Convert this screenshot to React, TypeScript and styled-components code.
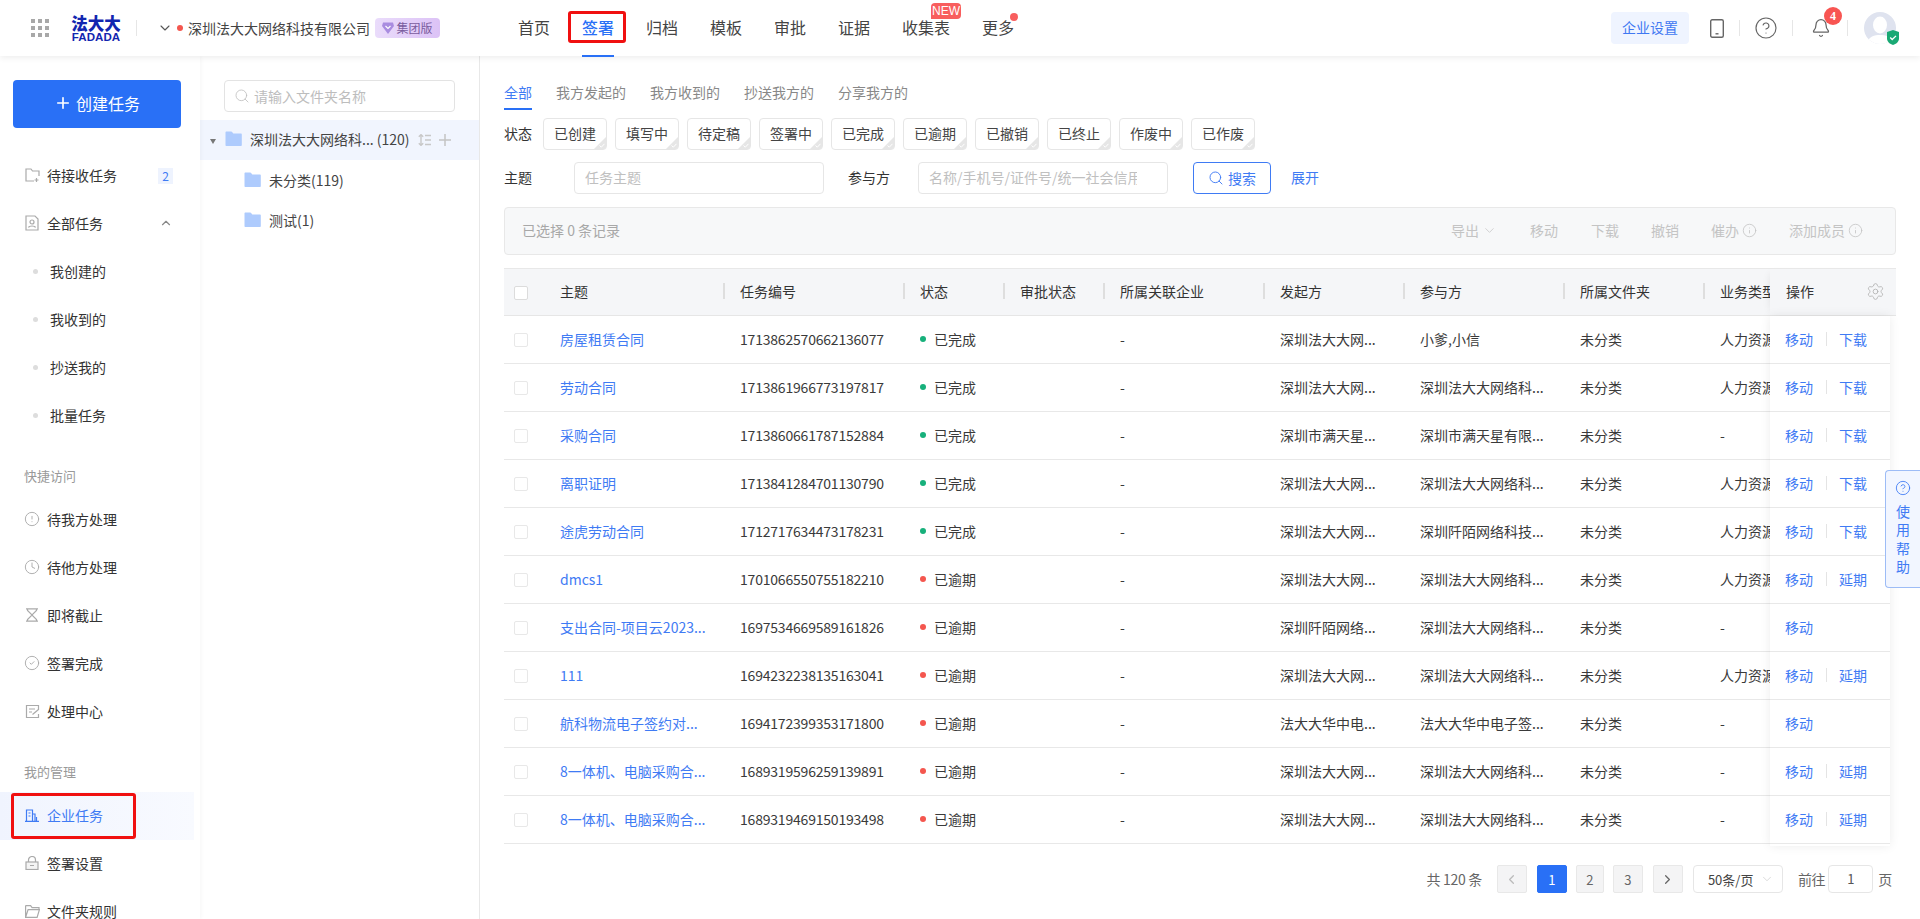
import React from "react";
import styled, { createGlobalStyle } from "styled-components";
import {
  Search, Plus, ChevronDown, ChevronUp, ChevronLeft, ChevronRight, CircleHelp, Bell, Settings, Info,
  CircleAlert, Clock, CircleCheck,
} from "lucide-react";

const BLUE = "#2970f6";
const LINK = "#3f7bf4";
const TEXT = "#333";
const COLS = "180px 180px 100px 100px 160px 140px 160px 140px 120px";

const Global = createGlobalStyle`
  html, body { margin: 0; padding: 0; height: 100%; overflow: hidden; background: #fff; }
  #root { height: 919px; }
  * { box-sizing: border-box; }
  body { font-family: "Noto Sans CJK SC", "Liberation Sans", sans-serif; font-size: 14px; color: ${TEXT}; }
`;

const Page = styled.div`
  display: flex; flex-direction: column; height: 919px; width: 1920px; overflow: hidden; position: relative;
`;

/* ---------- top bar ---------- */
const Header = styled.header`
  height: 56px; flex: none; display: flex; align-items: center; position: relative; z-index: 5;
  background: #fff; box-shadow: 0 2px 6px rgba(0, 0, 0, 0.07);
`;
const Apps = styled.div`
  margin-left: 31px; display: grid; grid-template-columns: repeat(3, 4px); grid-auto-rows: 4px; gap: 3px;
  span { background: #a8a8a8; }
`;
const Logo = styled.div`
  margin-left: 22px; width: 50px; display: flex; flex-direction: column; align-items: center; color: #1226b0;
  b { font-size: 16.5px; line-height: 16px; font-weight: 900; display: block; height: 16px; }
  i { font-size: 11.5px; line-height: 10px; height: 10px; display: block; font-style: normal; font-family: "Liberation Sans", sans-serif; font-weight: 700; letter-spacing: 0.1px; margin-top: 1px; }
`;
const VLine = styled.span<{ $l?: number }>`
  width: 1px; height: 16px; background: #e6e6e6; flex: none; margin-left: ${(p) => p.$l ?? 0}px;
`;
const Company = styled.div`
  display: flex; align-items: center; margin-left: 20px;
  svg { color: #555; }
`;
const RedDot = styled.span`
  width: 6px; height: 6px; border-radius: 50%; background: #f4564e; margin: 0 5px 0 4px;
`;
const CompanyName = styled.span`
  font-size: 14px; line-height: 20px; color: #444; width: 182px; white-space: nowrap;
`;
const Edition = styled.span`
  margin-left: 5px; width: 65px; height: 20px; border-radius: 4px; display: flex; align-items: center; justify-content: center; gap: 2px;
  background: linear-gradient(90deg, #eadcfb, #dcc2f6); color: #7a5c9e; font-size: 12px; line-height: 20px;
`;
const Nav = styled.nav`
  margin-left: 78px; height: 56px; display: flex; gap: 32px;
`;
const NavItem = styled.a<{ $active?: boolean }>`
  position: relative; height: 56px; line-height: 55px; font-size: 16px; white-space: nowrap;
  color: ${(p) => (p.$active ? BLUE : "#444")}; font-weight: ${(p) => (p.$active ? 500 : 400)};
  ${(p) => p.$active && `&::after { content: ""; position: absolute; left: 0; right: 0; bottom: -1px; height: 2px; background: ${BLUE}; }`}
`;
const NewTag = styled.span`
  position: absolute; left: 29px; top: 3px; width: 30px; height: 16px; background: #f85e5e; color: #fff; font-size: 12px; line-height: 16px;
  text-align: center; border-radius: 4px 4px 4px 0; font-family: "Liberation Sans", sans-serif;
`;
const NavDot = styled.span`
  position: absolute; right: -4px; top: 13px; width: 8px; height: 8px; border-radius: 50%; background: #f85e5e;
`;
const Mark = styled.span`
  position: absolute; border: 3px solid #f01010; border-radius: 3px; pointer-events: none;
`;
const NavMark = styled(Mark)`
  left: -14px; top: 11px; width: 58px; height: 32px;
`;
const HeaderRight = styled.div`
  margin-left: auto; display: flex; align-items: center; padding-right: 24px; color: #666;
`;
const OrgButton = styled.a`
  width: 78px; height: 32px; border-radius: 4px; background: #eff4ff; color: #3f78f2; font-size: 14px; line-height: 31px; text-align: center;
`;
const HeaderIcon = styled.span<{ $l: number; $r: number }>`
  display: flex; position: relative; margin-left: ${(p) => p.$l}px; margin-right: ${(p) => p.$r}px;
`;
const CountBadge = styled.span`
  position: absolute; left: 13px; top: -11px; width: 18px; height: 18px; border-radius: 50%; background: #f85552; color: #fff;
  font: 700 12px/18px "Liberation Serif", serif; text-align: center;
`;
const Avatar = styled.span`
  position: relative; width: 32px; height: 32px; margin-left: 16px; display: block;
`;

/* ---------- body ---------- */
const Body = styled.div`
  flex: 1; min-height: 0; display: flex;
`;
const Sidebar = styled.aside`
  width: 200px; flex: none; padding-top: 24px; box-shadow: 1px 0 4px rgba(0, 0, 0, 0.04); position: relative; z-index: 1; overflow: hidden;
`;
const CreateButton = styled.a`
  display: flex; align-items: center; justify-content: center; gap: 4px; width: 168px; height: 48px; margin: 0 0 24px 13px; padding-bottom: 2px;
  background: ${BLUE}; color: #fff; border-radius: 4px; font-size: 16px;
`;
const SideRow = styled.div<{ $active?: boolean }>`
  position: relative; height: 48px; width: 194px; display: flex; align-items: center; padding: 0 0 2px 25px; font-size: 14px;
  color: ${(p) => (p.$active ? LINK : TEXT)};
  background: ${(p) => (p.$active ? "linear-gradient(90deg,#f0f4fe,#f8faff)" : "transparent")};
  svg { color: ${(p) => (p.$active ? LINK : "#aaa")}; flex: none; }
`;
const SideIcon = styled.span`
  width: 22px; flex: none; display: flex; align-items: center;
`;
const LucideIcon = styled(SideIcon)`
  margin-left: -1px; width: 23px;
`;
const SideMark = styled(Mark)`
  left: 11px; top: 1px; width: 125px; height: 46px;
`;
const SubRow = styled(SideRow)`
  padding-left: 33px; gap: 12px;
  &::before { content: ""; width: 5px; height: 5px; border-radius: 50%; background: #ddd; }
`;
const SideBadge = styled.span`
  position: absolute; left: 158px; top: 16px; width: 15px; height: 16px; background: #eef3fe; color: ${LINK}; font-size: 12px; line-height: 16px; text-align: center;
`;
const SideChevron = styled.span`
  position: absolute; left: 159px; top: 16px; display: flex;
  svg { color: #888; }
`;
const SectionLabel = styled.div`
  margin: 24px 0 8px 24px; height: 24px; line-height: 23px; font-size: 13px; color: #999;
`;

const FolderPane = styled.section`
  width: 280px; flex: none; border-right: 1px solid #e8e8e8; padding-top: 24px;
`;
const FolderSearch = styled.div`
  margin: 0 24px 8px; width: 231px; height: 32px; border: 1px solid #e3e3e3; border-radius: 4px; display: flex; align-items: center; padding-left: 9px; gap: 4px;
  color: #bdbdbd; font-size: 14px; line-height: 20px; white-space: nowrap;
`;
const FolderRow = styled.div<{ $active?: boolean; $indent?: number }>`
  position: relative; height: 40px; display: flex; align-items: center; gap: 8px; white-space: nowrap;
  padding: 0 0 ${(p) => (p.$active ? 2 : 0)}px ${(p) => p.$indent ?? 0}px;
  background: ${(p) => (p.$active ? "#f1f5fe" : "transparent")}; color: #444;
`;
const Caret = styled.span`
  position: absolute; left: 10px; top: 19px; border: 3px solid transparent; border-top: 5px solid #777; border-bottom: 0;
`;
const FolderTools = styled.span`
  position: absolute; left: 218px; top: 14px; display: flex; gap: 8px;
`;

const Main = styled.main`
  flex: 1; min-width: 0; padding: 20px 24px 0; position: relative;
`;
const Tabs = styled.div`
  display: flex; gap: 24px; height: 34px;
`;
const Tab = styled.a<{ $active?: boolean }>`
  height: 34px; line-height: 33px; font-size: 14px; white-space: nowrap; color: ${(p) => (p.$active ? LINK : "#888")};
  border-bottom: 2px solid ${(p) => (p.$active ? BLUE : "transparent")};
`;
const FilterRow = styled.div<{ $top: number }>`
  display: flex; align-items: center; height: 32px; margin-top: ${(p) => p.$top}px;
`;
const FilterLabel = styled.span<{ $w: number; $l?: number }>`
  width: ${(p) => p.$w}px; margin-left: ${(p) => p.$l ?? 0}px; flex: none; font-size: 14px; line-height: 20px; padding-bottom: 2px; color: ${TEXT}; white-space: nowrap;
`;
const Chip = styled.span`
  position: relative; width: 64px; height: 32px; margin-right: 8px; border: 1px solid #e6e6e6; border-radius: 4px; overflow: hidden;
  text-align: center; line-height: 29px; font-size: 14px; color: #444; white-space: nowrap;
  &::after { content: ""; position: absolute; right: 0; bottom: 0; border: 6px solid transparent; border-right-color: #e6e6e6; border-bottom-color: #e6e6e6; }
  svg { position: absolute; right: 1px; bottom: 1px; z-index: 1; }
`;
const TextBox = styled.div`
  width: 250px; height: 32px; border: 1px solid #e6e6e6; border-radius: 4px; padding: 0 30px 0 10px; line-height: 29px; color: #c0c0c0; font-size: 14px; white-space: nowrap;
  span { display: block; overflow: hidden; }
`;
const SearchButton = styled.a`
  margin-left: 25px; width: 78px; height: 32px; border: 1px solid ${LINK}; border-radius: 4px; color: ${LINK}; display: flex; align-items: center; justify-content: center; gap: 4px; font-size: 14px; padding-bottom: 1px;
`;
const Expand = styled.a`
  margin-left: 20px; color: ${LINK}; font-size: 14px; line-height: 20px; padding-bottom: 2px;
`;
const SelectBar = styled.div`
  margin-top: 13px; height: 48px; background: #f7f8f9; border: 1px solid #e8e8e8; border-radius: 4px; display: flex; align-items: center; padding: 0 32px 2px 17px;
  color: #a8a8a8; font-size: 14px; white-space: nowrap;
`;
const BarAction = styled.span<{ $w: number }>`
  display: flex; align-items: center; gap: 3px; color: #c4c4c4; width: ${(p) => p.$w}px; flex: none;
  &:first-of-type { margin-left: auto; }
`;

const Table = styled.div`
  margin-top: 13px; display: flex; position: relative; height: 578px;
`;
const ScrollPart = styled.div`
  width: 1266px; flex: none; overflow: hidden; height: 577px;
`;
const HeadRow = styled.div`
  display: grid; grid-template-columns: 40px ${COLS}; width: 1320px; height: 48px; background: #f5f6f8; border-top: 1px solid #e8e8e8; border-bottom: 1px solid #e6e6e6; align-items: center;
`;
const BodyRow = styled.div`
  display: grid; grid-template-columns: 40px ${COLS}; width: 1320px; height: 48px; border-bottom: 1px solid #e8e8e8; align-items: center;
`;
const Cell = styled.div<{ $link?: boolean }>`
  padding: 0 0 2px 16px; font-size: 14px; line-height: 20px; white-space: nowrap; overflow: hidden; color: ${(p) => (p.$link ? LINK : "#3a3a3a")};
`;
const NumberCell = styled(Cell)`
  letter-spacing: -0.2px;
`;
const HeadCell = styled(Cell)`
  position: relative; overflow: visible; color: #333;
  &::before { content: ""; position: absolute; left: -1px; top: 2px; width: 2px; height: 16px; background: #dedede; }
`;
const FirstHead = styled(Cell)`
  color: #333;
`;
const CheckCell = styled.div`
  padding: 1px 0 0 10px;
`;
const Check = styled.span<{ $head?: boolean }>`
  display: block; width: 14px; height: 14px; background: #fff; border: 1px solid ${(p) => (p.$head ? "#dcdcdc" : "#e8e8e8")}; border-radius: 2px;
`;
const Status = styled.span<{ $color: string }>`
  display: flex; align-items: center; gap: 8px;
  &::before { content: ""; width: 6px; height: 6px; border-radius: 50%; background: ${(p) => p.$color}; }
`;
const FixedPart = styled.div`
  width: 126px; flex: none; position: relative; z-index: 2; margin-bottom: -8px;
`;
const FixedHead = styled.div`
  height: 48px; background: #f5f6f8; border-top: 1px solid #e8e8e8; border-bottom: 1px solid #e6e6e6; display: flex; align-items: center; justify-content: space-between; padding: 0 11px 2px 16px;
  box-shadow: -6px 0 8px -6px rgba(0, 0, 0, 0.08); color: #333;
  svg { color: #b4b4b4; }
`;
const FixedBody = styled.div`
  width: 120px; background: #fff; box-shadow: 0 0 10px rgba(0, 0, 0, 0.08); padding-bottom: 2px;
`;
const FixedRow = styled.div`
  height: 48px; border-bottom: 1px solid #e8e8e8; display: flex; align-items: center; padding: 0 0 2px 15px; font-size: 14px; color: ${LINK};
  i { width: 1px; height: 14px; background: #e4e4e4; margin: 0 12px 0 13px; }
`;
const Pager = styled.div`
  margin-top: 19px; margin-right: 4px; display: flex; align-items: center; justify-content: flex-end; height: 28px; font-size: 14px; color: #666;
`;
const PageButton = styled.span<{ $on?: boolean; $w?: number; $l?: number }>`
  width: ${(p) => p.$w ?? 30}px; height: 28px; margin-left: ${(p) => p.$l ?? 10}px; border-radius: 2px; display: flex; align-items: center; justify-content: center; border: 1px solid ${(p) => (p.$on ? BLUE : "#e8e8e8")};
  background: ${(p) => (p.$on ? BLUE : "#f4f4f5")}; color: ${(p) => (p.$on ? "#fff" : "#666")}; font-size: 13px;
`;
const PageSelect = styled.span`
  width: 90px; height: 28px; margin-left: 10px; border: 1px solid #e6e6e6; border-radius: 4px; display: flex; align-items: center; justify-content: space-between; padding: 0 8px 0 14px; color: #444; font-size: 13px;
  svg { color: #ccc; }
`;
const PageInput = styled.span`
  width: 45px; height: 28px; margin: 0 5px 0 3px; border: 1px solid #e6e6e6; border-radius: 4px; text-align: center; line-height: 26px; color: #555; font-size: 13px;
`;
const PagerText = styled.span<{ $l?: number }>`
  margin-left: ${(p) => p.$l ?? 0}px; white-space: nowrap; letter-spacing: -0.3px; line-height: 20px; padding-bottom: 1px;
`;
const HelpFloat = styled.div`
  position: absolute; right: 0; top: 470px; width: 35px; height: 118px; background: #f2f6ff; border: 1px solid #9dbcf6; border-right: 0; border-radius: 4px 0 0 4px; z-index: 6;
  display: flex; flex-direction: column; align-items: center; padding-top: 9px; color: ${LINK}; font-size: 14px; line-height: 18.4px; text-align: center;
  svg { margin-bottom: 6px; flex: none; }
`;

const FolderIcon = ({ c = "#aecbfd" }: { c?: string }) => (
  <svg width="17" height="16" viewBox="0 0 17 16">
    <path d="M0.500 1.500C0.500 .9 .9 .5 1.500 .5h4.700c.4 0 .7.2.9.5L8.300 2.500H15.800c.6 0 1 .4 1 1V14c0 .6-.4 1-1 1H1.500c-.6 0-1-.4-1-1z" fill={c} />
  </svg>
);
const ico = { fill: "none", stroke: "#aaa", strokeWidth: 1.2 };
const InboxIcon = () => (
  <svg width="15" height="16" viewBox="0 0 15 16" {...ico}><path d="M9 14H1V2h5l1.500 2H14v5" /><path d="M11.500 11v4M9.500 13h4" /></svg>
);
const PersonDoc = () => (
  <svg width="14" height="16" viewBox="0 0 14 16" {...ico}><path d="M1 1h9l3 3v11H1z" /><circle cx="7" cy="7" r="2" /><path d="M3.500 12.500c.6-2 6.400-2 7 0" /></svg>
);
const TimerIcon = () => (
  <svg width="14" height="14" viewBox="0 0 14 14" {...ico}><path d="M1 .8h12M1 13.200h12M2.500 1v1.500L7 7l4.500-4.500V1M2.500 13v-1.500L7 7l4.500 4.500V13" /></svg>
);
const TaskDoc = () => (
  <svg width="15" height="15" viewBox="0 0 15 15" {...ico}><path d="M13.500 6V1.500h-12v12H13.500V10" /><path d="M4 5h6M4 8h3" /><path d="M7.500 10.500l6-5" /></svg>
);
const Building = () => (
  <svg width="14" height="13" viewBox="0 0 14 13" fill="none" stroke={LINK} strokeWidth="1.200"><path d="M1.500 12V1h6v11M7.500 5h2.500v7" /><path d="M0 12.400h14M3.500 4h2M3.500 7h2M11.500 12V8" /></svg>
);
const LockIcon = () => (
  <svg width="14" height="14" viewBox="0 0 14 14" {...ico}><rect x="1" y="6" width="12" height="7.500" fill="#f4f4f4" /><path d="M3.500 6V4a3.500 3.500 0 017 0v2M5 9.500h4" /></svg>
);
const OpenFolder = () => (
  <svg width="15" height="13" viewBox="0 0 15 13" {...ico}><path d="M.6.6h5l1.500 2h6.900v2M.6 12.400V.6M.6 12.400h11.500L14.400 4.600H3.100z" /></svg>
);
const PhoneIcon = () => (
  <svg width="14" height="19" viewBox="0 0 14 19" fill="none" stroke="#666" strokeWidth="1.400"><rect x=".7" y=".7" width="12.600" height="17.600" rx="1.500" /><path d="M5.500 14.800h3" /></svg>
);
const GemIcon = () => (
  <svg width="12" height="14" viewBox="0 0 12 14"><path d="M1 1.500h10l1 3.500-6 8-6-8z" fill="#a98ce0" /><path d="M3.500 5L6 7.500 8.500 5" stroke="#fff" strokeWidth="1.100" fill="none" /></svg>
);
const SortIcon = () => (
  <svg width="13" height="12" viewBox="0 0 13 12" fill="none" stroke="#c8c8c8" strokeWidth="1.400"><path d="M3 .5v11M.8 2.800L3 .6l2.200 2.200M.8 9.200L3 11.400l2.200-2.200M7 1.500h6M7 6h6M7 10.500h6" /></svg>
);
const AddIcon = () => (
  <svg width="12" height="12" viewBox="0 0 12 12" fill="none" stroke="#c4c4c4" strokeWidth="1.500"><path d="M6 0v12M0 6h12" /></svg>
);
const ChipCheck = () => (
  <svg width="6" height="5" viewBox="0 0 6 5" fill="none" stroke="#fff" strokeWidth="1"><path d="M.5 2.500l1.800 1.700L5.500.8" /></svg>
);
const AvatarImg = () => (
  <svg width="38" height="38" viewBox="0 0 38 38">
    <clipPath id="av"><circle cx="16" cy="16" r="16" /></clipPath>
    <g clipPath="url(#av)">
      <rect width="32" height="32" fill="#dfe3ef" />
      <ellipse cx="16" cy="13" rx="7" ry="8.500" fill="#fff" />
      <path d="M3 32c1-8 8-9 13-9s12 1 13 9z" fill="#fff" />
    </g>
    <path d="M23 20l6-2 6 2v6.500c0 3.500-3 5.500-6 6.500-3-1-6-3-6-6.500z" fill="#19a974" />
    <path d="M26.200 25.500l2 2 3.800-3.600" stroke="#fff" strokeWidth="1.300" fill="none" />
  </svg>
);

const FAD = "深圳法大大网...";
const SZ = "深圳法大大网络科...";
const HR = "人力资源";
const rows = [
  ["房屋租赁合同", "1713862570662136077", "已完成", FAD, "小爹,小信", HR, "下载"],
  ["劳动合同", "1713861966773197817", "已完成", FAD, SZ, HR, "下载"],
  ["采购合同", "1713860661787152884", "已完成", "深圳市满天星...", "深圳市满天星有限...", "-", "下载"],
  ["离职证明", "1713841284701130790", "已完成", FAD, SZ, HR, "下载"],
  ["途虎劳动合同", "1712717634473178231", "已完成", FAD, "深圳阡陌网络科技...", HR, "下载"],
  ["dmcs1", "1701066550755182210", "已逾期", FAD, SZ, HR, "延期"],
  ["支出合同-项目云2023...", "1697534669589161826", "已逾期", "深圳阡陌网络...", SZ, "-", ""],
  ["111", "1694232238135163041", "已逾期", FAD, SZ, HR, "延期"],
  ["航科物流电子签约对...", "1694172399353171800", "已逾期", "法大大华中电...", "法大大华中电子签...", "-", ""],
  ["8一体机、电脑采购合...", "1689319596259139891", "已逾期", FAD, SZ, "-", "延期"],
  ["8一体机、电脑采购合...", "1689319469150193498", "已逾期", FAD, SZ, "-", "延期"],
];
const chips = ["已创建", "填写中", "待定稿", "签署中", "已完成", "已逾期", "已撤销", "已终止", "作废中", "已作废"];
const navs = ["首页", "签署", "归档", "模板", "审批", "证据", "收集表", "更多"];

export default function App() {
  return (
    <Page>
      <Global />
      <Header>
        <Apps>{Array.from({ length: 9 }, (_, i) => <span key={i} />)}</Apps>
        <Logo><b>法大大</b><i>FADADA</i></Logo>
        <VLine $l={15} />
        <Company>
          <ChevronDown size={16} strokeWidth={1.6} />
          <RedDot />
          <CompanyName>深圳法大大网络科技有限公司</CompanyName>
          <Edition><GemIcon />集团版</Edition>
        </Company>
        <Nav>
          {navs.map((n) => (
            <NavItem key={n} $active={n === "签署"}>
              {n}
              {n === "签署" && <NavMark />}
              {n === "收集表" && <NewTag>NEW</NewTag>}
              {n === "更多" && <NavDot />}
            </NavItem>
          ))}
        </Nav>
        <HeaderRight>
          <OrgButton>企业设置</OrgButton>
          <HeaderIcon $l={21} $r={15}><PhoneIcon /></HeaderIcon>
          <VLine />
          <HeaderIcon $l={14} $r={14}><CircleHelp size={24} strokeWidth={1.15} /></HeaderIcon>
          <VLine />
          <HeaderIcon $l={18} $r={16}><Bell size={20} strokeWidth={1.5} /><CountBadge>4</CountBadge></HeaderIcon>
          <VLine />
          <Avatar><AvatarImg /></Avatar>
        </HeaderRight>
      </Header>
      <Body>
        <Sidebar>
          <CreateButton><Plus size={18} strokeWidth={2.2} />创建任务</CreateButton>
          <SideRow><SideIcon><InboxIcon /></SideIcon>待接收任务<SideBadge>2</SideBadge></SideRow>
          <SideRow><SideIcon><PersonDoc /></SideIcon>全部任务<SideChevron><ChevronUp size={14} /></SideChevron></SideRow>
          <SubRow>我创建的</SubRow>
          <SubRow>我收到的</SubRow>
          <SubRow>抄送我的</SubRow>
          <SubRow>批量任务</SubRow>
          <SectionLabel>快捷访问</SectionLabel>
          <SideRow><LucideIcon><CircleAlert size={16} strokeWidth={1.4} /></LucideIcon>待我方处理</SideRow>
          <SideRow><LucideIcon><Clock size={16} strokeWidth={1.4} /></LucideIcon>待他方处理</SideRow>
          <SideRow><SideIcon><TimerIcon /></SideIcon>即将截止</SideRow>
          <SideRow><LucideIcon><CircleCheck size={16} strokeWidth={1.4} /></LucideIcon>签署完成</SideRow>
          <SideRow><SideIcon><TaskDoc /></SideIcon>处理中心</SideRow>
          <SectionLabel>我的管理</SectionLabel>
          <SideRow $active><SideIcon><Building /></SideIcon>企业任务<SideMark /></SideRow>
          <SideRow><SideIcon><LockIcon /></SideIcon>签署设置</SideRow>
          <SideRow><SideIcon><OpenFolder /></SideIcon>文件夹规则</SideRow>
        </Sidebar>
        <FolderPane>
          <FolderSearch><Search size={16} strokeWidth={1.2} />请输入文件夹名称</FolderSearch>
          <FolderRow $active $indent={25}>
            <Caret /><FolderIcon />深圳法大大网络科... (120)
            <FolderTools><SortIcon /><AddIcon /></FolderTools>
          </FolderRow>
          <FolderRow $indent={44}><FolderIcon />未分类(119)</FolderRow>
          <FolderRow $indent={44}><FolderIcon />测试(1)</FolderRow>
        </FolderPane>
        <Main>
          <Tabs>
            <Tab $active>全部</Tab>
            <Tab>我方发起的</Tab>
            <Tab>我方收到的</Tab>
            <Tab>抄送我方的</Tab>
            <Tab>分享我方的</Tab>
          </Tabs>
          <FilterRow $top={8}>
            <FilterLabel $w={39}>状态</FilterLabel>
            {chips.map((c) => <Chip key={c}>{c}<ChipCheck /></Chip>)}
          </FilterRow>
          <FilterRow $top={12}>
            <FilterLabel $w={70}>主题</FilterLabel>
            <TextBox><span>任务主题</span></TextBox>
            <FilterLabel $w={70} $l={24}>参与方</FilterLabel>
            <TextBox><span>名称/手机号/证件号/统一社会信用代码</span></TextBox>
            <SearchButton><Search size={16} strokeWidth={1.4} />搜索</SearchButton>
            <Expand>展开</Expand>
          </FilterRow>
          <SelectBar>
            已选择 0 条记录
            <BarAction $w={79}>导出<ChevronDown size={15} strokeWidth={1.2} /></BarAction>
            <BarAction $w={61}>移动</BarAction>
            <BarAction $w={60}>下载</BarAction>
            <BarAction $w={60}>撤销</BarAction>
            <BarAction $w={78}>催办<Info size={15} strokeWidth={1.3} /></BarAction>
            <BarAction $w={74}>添加成员<Info size={15} strokeWidth={1.3} /></BarAction>
          </SelectBar>
          <Table>
            <ScrollPart>
              <HeadRow>
                <CheckCell><Check $head /></CheckCell>
                <FirstHead>主题</FirstHead>
                {["任务编号", "状态", "审批状态", "所属关联企业", "发起方", "参与方", "所属文件夹", "业务类型"].map((h) => (
                  <HeadCell key={h}>{h}</HeadCell>
                ))}
              </HeadRow>
              {rows.map((r, i) => (
                <BodyRow key={i}>
                  <CheckCell><Check /></CheckCell>
                  <Cell $link>{r[0]}</Cell>
                  <NumberCell>{r[1]}</NumberCell>
                  <Cell><Status $color={r[2] === "已完成" ? "#17b07b" : "#f4564e"}>{r[2]}</Status></Cell>
                  <Cell />
                  <Cell>-</Cell>
                  <Cell>{r[3]}</Cell>
                  <Cell>{r[4]}</Cell>
                  <Cell>未分类</Cell>
                  <Cell>{r[5]}</Cell>
                </BodyRow>
              ))}
            </ScrollPart>
            <FixedPart>
              <FixedHead>操作<Settings size={19} strokeWidth={1.1} /></FixedHead>
              <FixedBody>
                {rows.map((r, i) => (
                  <FixedRow key={i}>
                    移动
                    {r[6] && <i />}
                    {r[6]}
                  </FixedRow>
                ))}
              </FixedBody>
            </FixedPart>
          </Table>
          <Pager>
            <PagerText>共 120 条</PagerText>
            <PageButton $l={15}><ChevronLeft size={15} color="#bbb" /></PageButton>
            <PageButton $on>1</PageButton>
            <PageButton $w={28} $l={9}>2</PageButton>
            <PageButton $l={9}>3</PageButton>
            <PageButton><ChevronRight size={15} color="#666" /></PageButton>
            <PageSelect>50条/页<ChevronDown size={14} strokeWidth={1.2} /></PageSelect>
            <PagerText $l={15}>前往</PagerText>
            <PageInput>1</PageInput>
            <PagerText>页</PagerText>
          </Pager>
        </Main>
      </Body>
      <HelpFloat><CircleHelp size={16} strokeWidth={1.3} />使<br />用<br />帮<br />助</HelpFloat>
    </Page>
  );
}
